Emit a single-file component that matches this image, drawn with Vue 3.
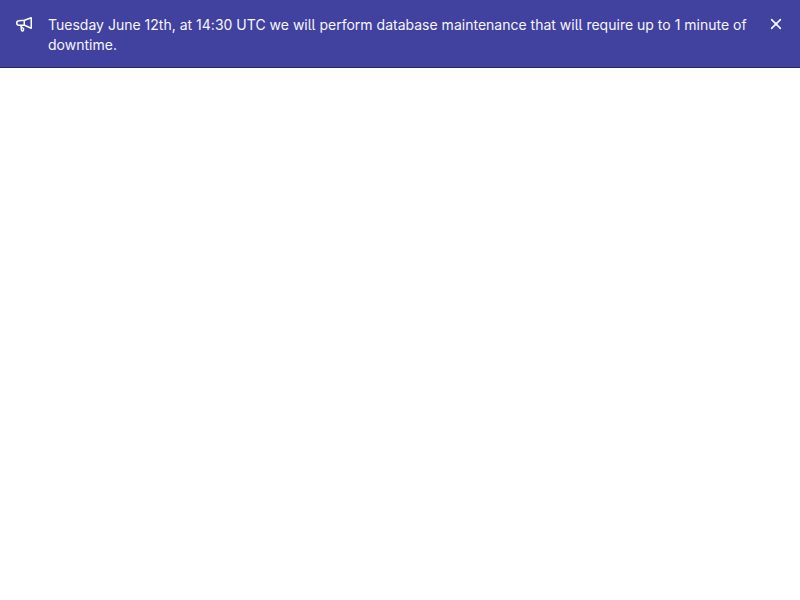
<script setup>
import { ref } from 'vue'
const visible = ref(true)
</script>

<template>
  <div v-if="visible" class="broadcast" role="alert">
    <svg class="icon" viewBox="0 0 16 16" fill="none" stroke="currentColor" stroke-width="1.5" stroke-linejoin="round" aria-hidden="true">
      <path d="M15.25 1.75v10.5L8.5 9.25H3A2.25 2.25 0 0 1 3 4.75L8.5 4.25 15.25 1.75Z" />
      <path d="M8.25 4.5v4.75M5 9.5l.4 4.4a1.05 1.05 0 0 0 2.1 0v-1.4L5.6 11" stroke-linecap="round" />
    </svg>
    <div class="message">Tuesday June 12th, at 14:30 UTC we will perform database maintenance that will require up to 1 minute of downtime.</div>
    <button class="close" aria-label="Close" @click="visible = false">
      <svg class="icon" viewBox="0 0 16 16" fill="none" stroke="currentColor" stroke-width="1.6" stroke-linecap="round" aria-hidden="true">
        <path d="m3.6 3.6 8.8 8.8M12.4 3.6l-8.8 8.8" />
      </svg>
    </button>
  </div>
</template>

<style>
body { background: #fff; }
</style>

<style scoped>
.broadcast {
  display: flex;
  align-items: flex-start;
  box-sizing: border-box;
  padding: 14px 16px 12px;
  border-bottom: 1px solid #292961;
  background: #41419f;
  color: #fff;
  font: 400 14px/20px Inter, "Noto Sans", sans-serif;
}
.icon {
  display: block;
  flex: none;
  width: 16px;
  height: 16px;
  margin-top: 2px;
}
.message {
  flex: 1;
  padding: 1px 16px 0;
  color: #f6f6fc;
  font-feature-settings: "cv05";
  letter-spacing: 0.007px;
}
.close {
  flex: none;
  padding: 0;
  border: 0;
  background: none;
  color: inherit;
  cursor: pointer;
}
</style>
